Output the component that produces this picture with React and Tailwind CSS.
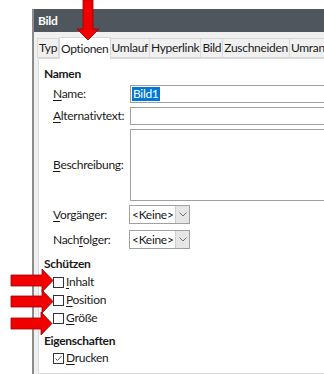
const FONT = { fontFamily: 'Lato, "Noto Sans", sans-serif' };

function Mn({ pre = "", u, post = "" }) {
  return (
    <span>
      {pre}
      <span className="underline underline-offset-2">{u}</span>
      {post}
    </span>
  );
}

function Tab({ label, active }) {
  return (
    <div
      className={
        active
          ? "h-[22px] px-px bg-white border border-b-0 border-[#d9d9d9] flex items-center relative top-[1px]"
          : "h-[20px] px-px bg-[#f0f0f0] border border-[#d9d9d9] -ml-px flex items-center"
      }
    >
      {label}
    </div>
  );
}

function Select() {
  return (
    <div className="h-[19px] w-[61px] border border-[#a0a0a0] bg-white flex items-stretch">
      <div className="flex-1 pl-[2px] flex items-center">&lt;Keine&gt;</div>
      <div className="w-[14px] bg-[#e6e6e6] border-l border-[#cfcfcf] flex items-center justify-center">
        <svg width="8" height="5" viewBox="0 0 8 5">
          <path d="M0.5 0.5 L4 4 L7.5 0.5" fill="none" stroke="#707070" strokeWidth="1" />
        </svg>
      </div>
    </div>
  );
}

function Check({ checked, children }) {
  return (
    <div className="h-[18px] pl-[9px] flex items-center gap-[2px]">
      <div className="w-[11px] h-[11px] border border-[#333] bg-white flex items-center justify-center">
        {checked && (
          <svg width="9" height="9" viewBox="0 0 9 9">
            <path d="M1.5 4.5 L3.5 6.5 L7.5 2" fill="none" stroke="#555" strokeWidth="1" />
          </svg>
        )}
      </div>
      <span>{children}</span>
    </div>
  );
}

function Arrow({ points }) {
  return <polygon points={points} fill="#f20000" stroke="#9b0000" strokeWidth="0.8" />;
}

export default function App() {
  return (
    <div
      className="relative w-[324px] h-[374px] bg-white overflow-hidden pt-[9px] pl-[32px] text-[12px] tracking-[-0.3px] text-[#1a1a1a]"
      style={FONT}
    >
      <div className="w-[360px] h-[365px] flex flex-col border-l-2 border-[#8c8c8c]">
        {/* title */}
        <div className="h-[23px] bg-[#50565d] text-white font-bold flex items-center pl-[4px]">Bild</div>

        {/* body */}
        <div className="flex-1 bg-[#f0f0f0] pl-[4px] pt-[4px] flex flex-col">
          <div className="flex items-end whitespace-nowrap relative z-10">
            <Tab label="Typ" />
            <Tab label="Optionen" active />
            <Tab label="Umlauf" />
            <Tab label="Hyperlink" />
            <Tab label="Bild" />
            <Tab label="Zuschneiden" />
            <Tab label="Umrandung" />
          </div>

          <div className="flex-1 bg-white border border-[#d9d9d9] pl-[5px] pt-[7px]">
            <div className="h-4 font-bold flex items-center">Namen</div>

            <div className="mt-[3px] h-[18px] flex items-center">
              <div className="w-[86px] pl-[9px]"><Mn u="N" post="ame:" /></div>
              <div className="flex-1 h-[18px] border border-[#a0a0a0] flex items-center pl-px">
                <span className="bg-[#0078d7] text-white leading-[14px] px-px">Bild1</span>
              </div>
            </div>

            <div className="mt-[4px] h-[18px] flex items-center">
              <div className="w-[86px] pl-[9px]"><Mn u="A" post="lternativtext:" /></div>
              <div className="flex-1 h-[18px] border border-[#a0a0a0]" />
            </div>

            <div className="mt-[4px] h-[72px] flex items-center">
              <div className="w-[86px] pl-[9px]"><Mn u="B" post="eschreibung:" /></div>
              <div className="flex-1 h-[72px] border border-[#a0a0a0]" />
            </div>

            <div className="mt-[4px] h-[19px] flex items-center">
              <div className="w-[85px] pl-[9px]"><Mn u="V" post="orgänger:" /></div>
              <Select />
            </div>

            <div className="mt-[6px] h-[19px] flex items-center">
              <div className="w-[85px] pl-[9px]"><Mn pre="Nach" u="f" post="olger:" /></div>
              <Select />
            </div>

            <div className="mt-[7px] h-4 font-bold flex items-center">Schützen</div>
            <div className="mt-px">
              <Check><Mn u="I" post="nhalt" /></Check>
              <Check><Mn u="P" post="osition" /></Check>
              <Check><Mn u="G" post="röße" /></Check>
            </div>

            <div className="mt-[6px] h-4 font-bold flex items-center">Eigenschaften</div>
            <Check checked><Mn u="D" post="rucken" /></Check>
          </div>
        </div>
      </div>

      {/* red arrows */}
      <svg className="absolute left-0 top-0 z-20 pointer-events-none" width="324" height="374">
        <Arrow points="83,0 93,0 93,29 99,29 88,40 77,29 83,29" />
        <Arrow points="11,275 42,275 42,269 53,280.5 42,292 42,286 11,286" />
        <Arrow points="11,296 42,296 42,290 53,301.5 42,313 42,307 11,307" />
        <Arrow points="11,318 41,318 41,312 52,323.5 41,335 41,329 11,329" />
      </svg>
    </div>
  );
}
